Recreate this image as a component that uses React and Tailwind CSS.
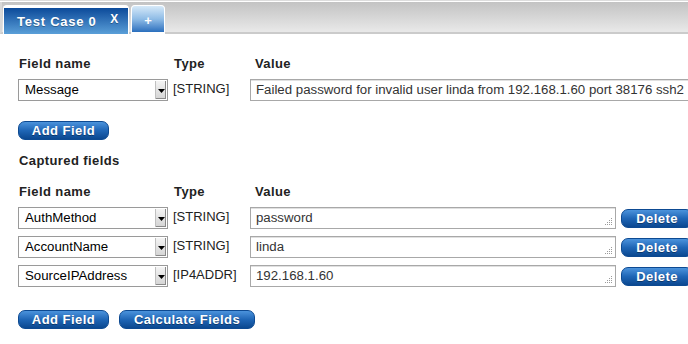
import React from "react";

const font = "font-['Liberation_Sans',Arial,sans-serif]";

function Btn({ children, className = "" }) {
  return (
    <button
      className={`h-[19px] rounded-[7px] bg-gradient-to-b from-[#4b93dc] via-[#1f66b6] to-[#0b4890] border border-[#0d4a92] text-white text-[13px] font-bold tracking-[0.45px] leading-none [text-shadow:0_1px_0_rgba(0,0,0,0.35)] ${className}`}
    >
      {children}
    </button>
  );
}

function Select({ value }) {
  return (
    <div className="w-[150px] h-[22px] flex border border-[#9a9a9a] bg-white">
      <div className="flex-1 pl-[6px] text-[13.25px] leading-[20px] text-black">{value}</div>
      <div className="w-[11px] my-[1px] mr-[1px] bg-gradient-to-b from-[#f4f4f4] to-[#d4d4d4] border-l border-[#c0c0c0] shadow-[inset_-1px_-1px_0_#8a8a8a] flex items-center justify-center">
        <svg width="7" height="4" viewBox="0 0 7 4" className="mt-[2px]">
          <path d="M0 0h7L3.5 4z" fill="#000" />
        </svg>
      </div>
    </div>
  );
}

function Grip() {
  return (
    <svg width="9" height="9" viewBox="0 0 9 9" className="absolute right-[2px] bottom-[2px]">
      {[
        [7, 1],
        [7, 3],
        [5, 3],
        [7, 5],
        [5, 5],
        [3, 5],
        [7, 7],
        [5, 7],
        [3, 7],
        [1, 7],
      ].map(([x, y], i) => (
        <rect key={i} x={x} y={y} width="1" height="1" fill="#9a9a9a" />
      ))}
    </svg>
  );
}

function Header() {
  return (
    <div className="grid grid-cols-[155px_77px_1fr] text-[13px] font-bold tracking-[0.4px] text-[#222] leading-[15px]">
      <div className="pl-[1px]">Field name</div>
      <div className="pl-[1px]">Type</div>
      <div className="pl-[5px]">Value</div>
    </div>
  );
}

function Row({ name, type, value, captured }) {
  return (
    <div className="grid grid-cols-[155px_77px_1fr] text-[13px] text-[#222] h-[22px]">
      <Select value={name} />
      <div className="leading-[15px] pt-[2px]">{type}</div>
      {captured ? (
        <div className="flex items-center">
          <div className="relative w-[366px] h-[22px] border border-[#a8a8a8] shadow-[inset_0_1px_0_#e0e0e0] bg-white pl-[5px] leading-[20px] text-[13.25px] text-[#333]">
            {value}
            <Grip />
          </div>
          <Btn className="ml-[5px] w-[72px] shrink-0">Delete</Btn>
        </div>
      ) : (
        <div className="w-[460px] h-[22px] border border-[#a8a8a8] shadow-[inset_0_1px_0_#e0e0e0] bg-white pl-[5px] leading-[20px] text-[13.25px] text-[#333] whitespace-nowrap overflow-hidden">
          {value}
        </div>
      )}
    </div>
  );
}

export default function App() {
  return (
    <div className={`${font} w-[688px] h-[344px] overflow-hidden bg-white`}>
      {/* Tab bar */}
      <div className="h-[34px] border-t border-[#dddddd] pt-[1px]">
        <div className="h-[32px] bg-gradient-to-b from-[#c3c3c3] to-[#e9e9e9] border-b-2 border-[#cbcbcb] border-l-2 border-l-[#d8d8d8] flex items-end pl-[1px] gap-[2px]">
          <div className="h-[29px] w-[126px] -mb-[2px] rounded-t-[4px] border-t-[3px] border-x border-white bg-white">
            <div className="h-full bg-gradient-to-b from-[#0a4a9a] to-[#5a9fd8] flex items-center pl-[13px] pr-[9px] text-white font-bold text-[13px] tracking-[0.75px] [text-shadow:0_1px_0_rgba(0,0,0,0.3)]">
              <span className="mt-[2px]">Test Case 0</span>
              <span className="ml-auto -mt-[4px] text-[12px]">X</span>
            </div>
          </div>
          <div className="h-[29px] w-[34px] -mb-[2px] rounded-t-[4px] border-t-[1px] border-x border-b-2 border-white bg-white">
            <div className="h-full rounded-t-[3px] bg-gradient-to-b from-[#d6e9f8] via-[#8fbce6] to-[#2a6fbd] flex items-center justify-center text-white text-[13px] font-bold">
              <span className="mt-[3px]">+</span>
            </div>
          </div>
        </div>
      </div>

      {/* Content */}
      <div className="pl-[18px] pt-[22px] flex flex-col">
        <Header />
        <div className="mt-[8px]">
          <Row
            name="Message"
            type="[STRING]"
            value="Failed password for invalid user linda from 192.168.1.60 port 38176 ssh2"
          />
        </div>
        <div className="mt-[20px] flex">
          <Btn className="w-[91px]">Add Field</Btn>
        </div>
        <div className="mt-[13px] text-[13px] font-bold tracking-[0.4px] text-[#222] leading-[15px] pl-[1px]">
          Captured fields
        </div>
        <div className="mt-[16px]">
          <Header />
        </div>
        <div className="mt-[8px] flex flex-col gap-[7px]">
          <Row name="AuthMethod" type="[STRING]" value="password" captured />
          <Row name="AccountName" type="[STRING]" value="linda" captured />
          <Row name="SourceIPAddress" type="[IP4ADDR]" value="192.168.1.60" captured />
        </div>
        <div className="mt-[23px] flex gap-[10px]">
          <Btn className="w-[91px]">Add Field</Btn>
          <Btn className="w-[136px]">Calculate Fields</Btn>
        </div>
      </div>
    </div>
  );
}
